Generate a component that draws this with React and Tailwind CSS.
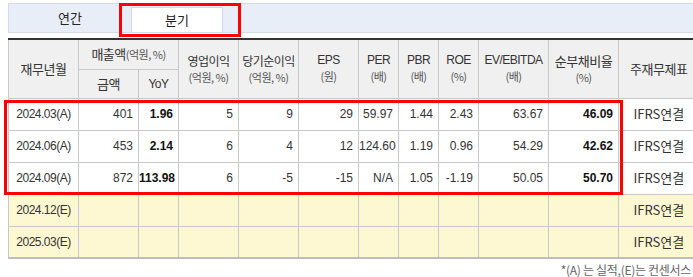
import React from "react";

const rows = [
  { d: "2024.03(A)", v: ["401", "1.96", "5", "9", "29", "59.97", "1.44", "2.43", "63.67", "46.09"] },
  { d: "2024.06(A)", v: ["453", "2.14", "6", "4", "12", "124.60", "1.19", "0.96", "54.29", "42.62"] },
  { d: "2024.09(A)", v: ["872", "113.98", "6", "-5", "-15", "N/A", "1.05", "-1.19", "50.05", "50.70"] },
];
const est = ["2024.12(E)", "2025.03(E)"];
const widths = [70, 60, 40, 60, 60, 60, 40, 40, 40, 70, 70, 80];
const boldCols = [1, 9];

const ko = { fontFamily: '"Noto Sans CJK KR", "Liberation Sans", sans-serif' };
const num = { fontFamily: '"Liberation Sans", "Noto Sans CJK KR", sans-serif' };

const th = "border border-[#c9c9c9] bg-[#f0f0f0] text-center font-normal text-[#333] leading-[16px] p-0 whitespace-nowrap tracking-[-0.5px]";
const td = "border border-[#c9c9c9] h-[32px] p-0 whitespace-nowrap";
const sub = "text-[11px] text-[#555]";

export default function App() {
  return (
    <div className="relative w-[693px] h-[277px] overflow-hidden bg-white" style={ko}>
      <div className="ml-[8px] mt-[3px] w-[700px] h-[30px] bg-[#e8eef8] border border-[#d3dbe8] flex items-end">
        <div className="w-[122px] h-full flex items-center justify-center text-[13px] text-[#222]">연간</div>
        <div className="w-[92px] h-[25px] bg-white border border-b-0 border-[#d0d8e6] flex items-center justify-center text-[13px] text-[#222]">
          분기
        </div>
      </div>

      <table className="ml-[8px] mt-[5px] border-collapse table-fixed w-[690px] border-t-2 border-t-[#333] border-b-2 border-b-[#bdbdbd] text-[12px]">
        <colgroup>
          {widths.map((w, i) => (
            <col key={i} style={{ width: w }} />
          ))}
        </colgroup>
        <thead>
          <tr className="h-[30px]">
            <th rowSpan={2} className={`${th} text-[13px] border-t-0`}>재무년월</th>
            <th colSpan={2} className={`${th} text-[13px] border-t-0`}>
              매출액<span className={sub}>(억원, %)</span>
            </th>
            <th rowSpan={2} className={`${th} text-[12px] border-t-0`}>
              영업이익<br /><span className={sub}>(억원, %)</span>
            </th>
            <th rowSpan={2} className={`${th} text-[12px] border-t-0`}>
              당기순이익<br /><span className={sub}>(억원, %)</span>
            </th>
            <th rowSpan={2} className={`${th} border-t-0`} style={num}>
              EPS<br /><span className={sub} style={ko}>(원)</span>
            </th>
            <th rowSpan={2} className={`${th} border-t-0`} style={num}>
              PER<br /><span className={sub} style={ko}>(배)</span>
            </th>
            <th rowSpan={2} className={`${th} border-t-0`} style={num}>
              PBR<br /><span className={sub} style={ko}>(배)</span>
            </th>
            <th rowSpan={2} className={`${th} border-t-0`} style={num}>
              ROE<br /><span className={sub} style={ko}>(%)</span>
            </th>
            <th rowSpan={2} className={`${th} border-t-0`} style={num}>
              EV/EBITDA<br /><span className={sub} style={ko}>(배)</span>
            </th>
            <th rowSpan={2} className={`${th} text-[13px] border-t-0`}>
              순부채비율<br /><span className={sub}>(%)</span>
            </th>
            <th rowSpan={2} className={`${th} text-[13px] border-t-0 border-r-0`}>주재무제표</th>
          </tr>
          <tr className="h-[29px]">
            <th className={`${th} text-[13px]`}>금액</th>
            <th className={`${th} text-[12px]`} style={num}>YoY</th>
          </tr>
        </thead>
        <tbody>
          {rows.map((r) => (
            <tr key={r.d}>
              <td className={`${td} text-center text-[12px] text-[#333] tracking-[-0.5px]`} style={num}>{r.d}</td>
              {r.v.map((v, i) => (
                <td
                  key={i}
                  className={`${td} text-right pr-[5px] text-[12px] ${boldCols.includes(i) ? "font-bold text-[#111]" : "text-[#333]"}`}
                  style={num}
                >
                  {v}
                </td>
              ))}
              <td className={`${td} text-center text-[13px] text-[#333] border-r-0`}>IFRS연결</td>
            </tr>
          ))}
          {est.map((d) => (
            <tr key={d} className="bg-[#fdf7d2]">
              <td className={`${td} text-center text-[12px] text-[#333] tracking-[-0.5px]`} style={num}>{d}</td>
              {Array.from({ length: 10 }).map((_, i) => (
                <td key={i} className={td}></td>
              ))}
              <td className={`${td} text-center text-[13px] text-[#333] border-r-0`}>IFRS연결</td>
            </tr>
          ))}
        </tbody>
      </table>

      <div className="mt-[2px] pr-[2px] text-right text-[12px] text-[#666] tracking-[-0.3px]">*(A) 는 실적,(E)는 컨센서스</div>

      <div className="absolute left-[119px] top-[3px] w-[122px] h-[34px] border-[3px] border-[#ff0000]"></div>
      <div className="absolute left-[4px] top-[100px] w-[619px] h-[95px] border-[3px] border-[#ff0000]"></div>
    </div>
  );
}
